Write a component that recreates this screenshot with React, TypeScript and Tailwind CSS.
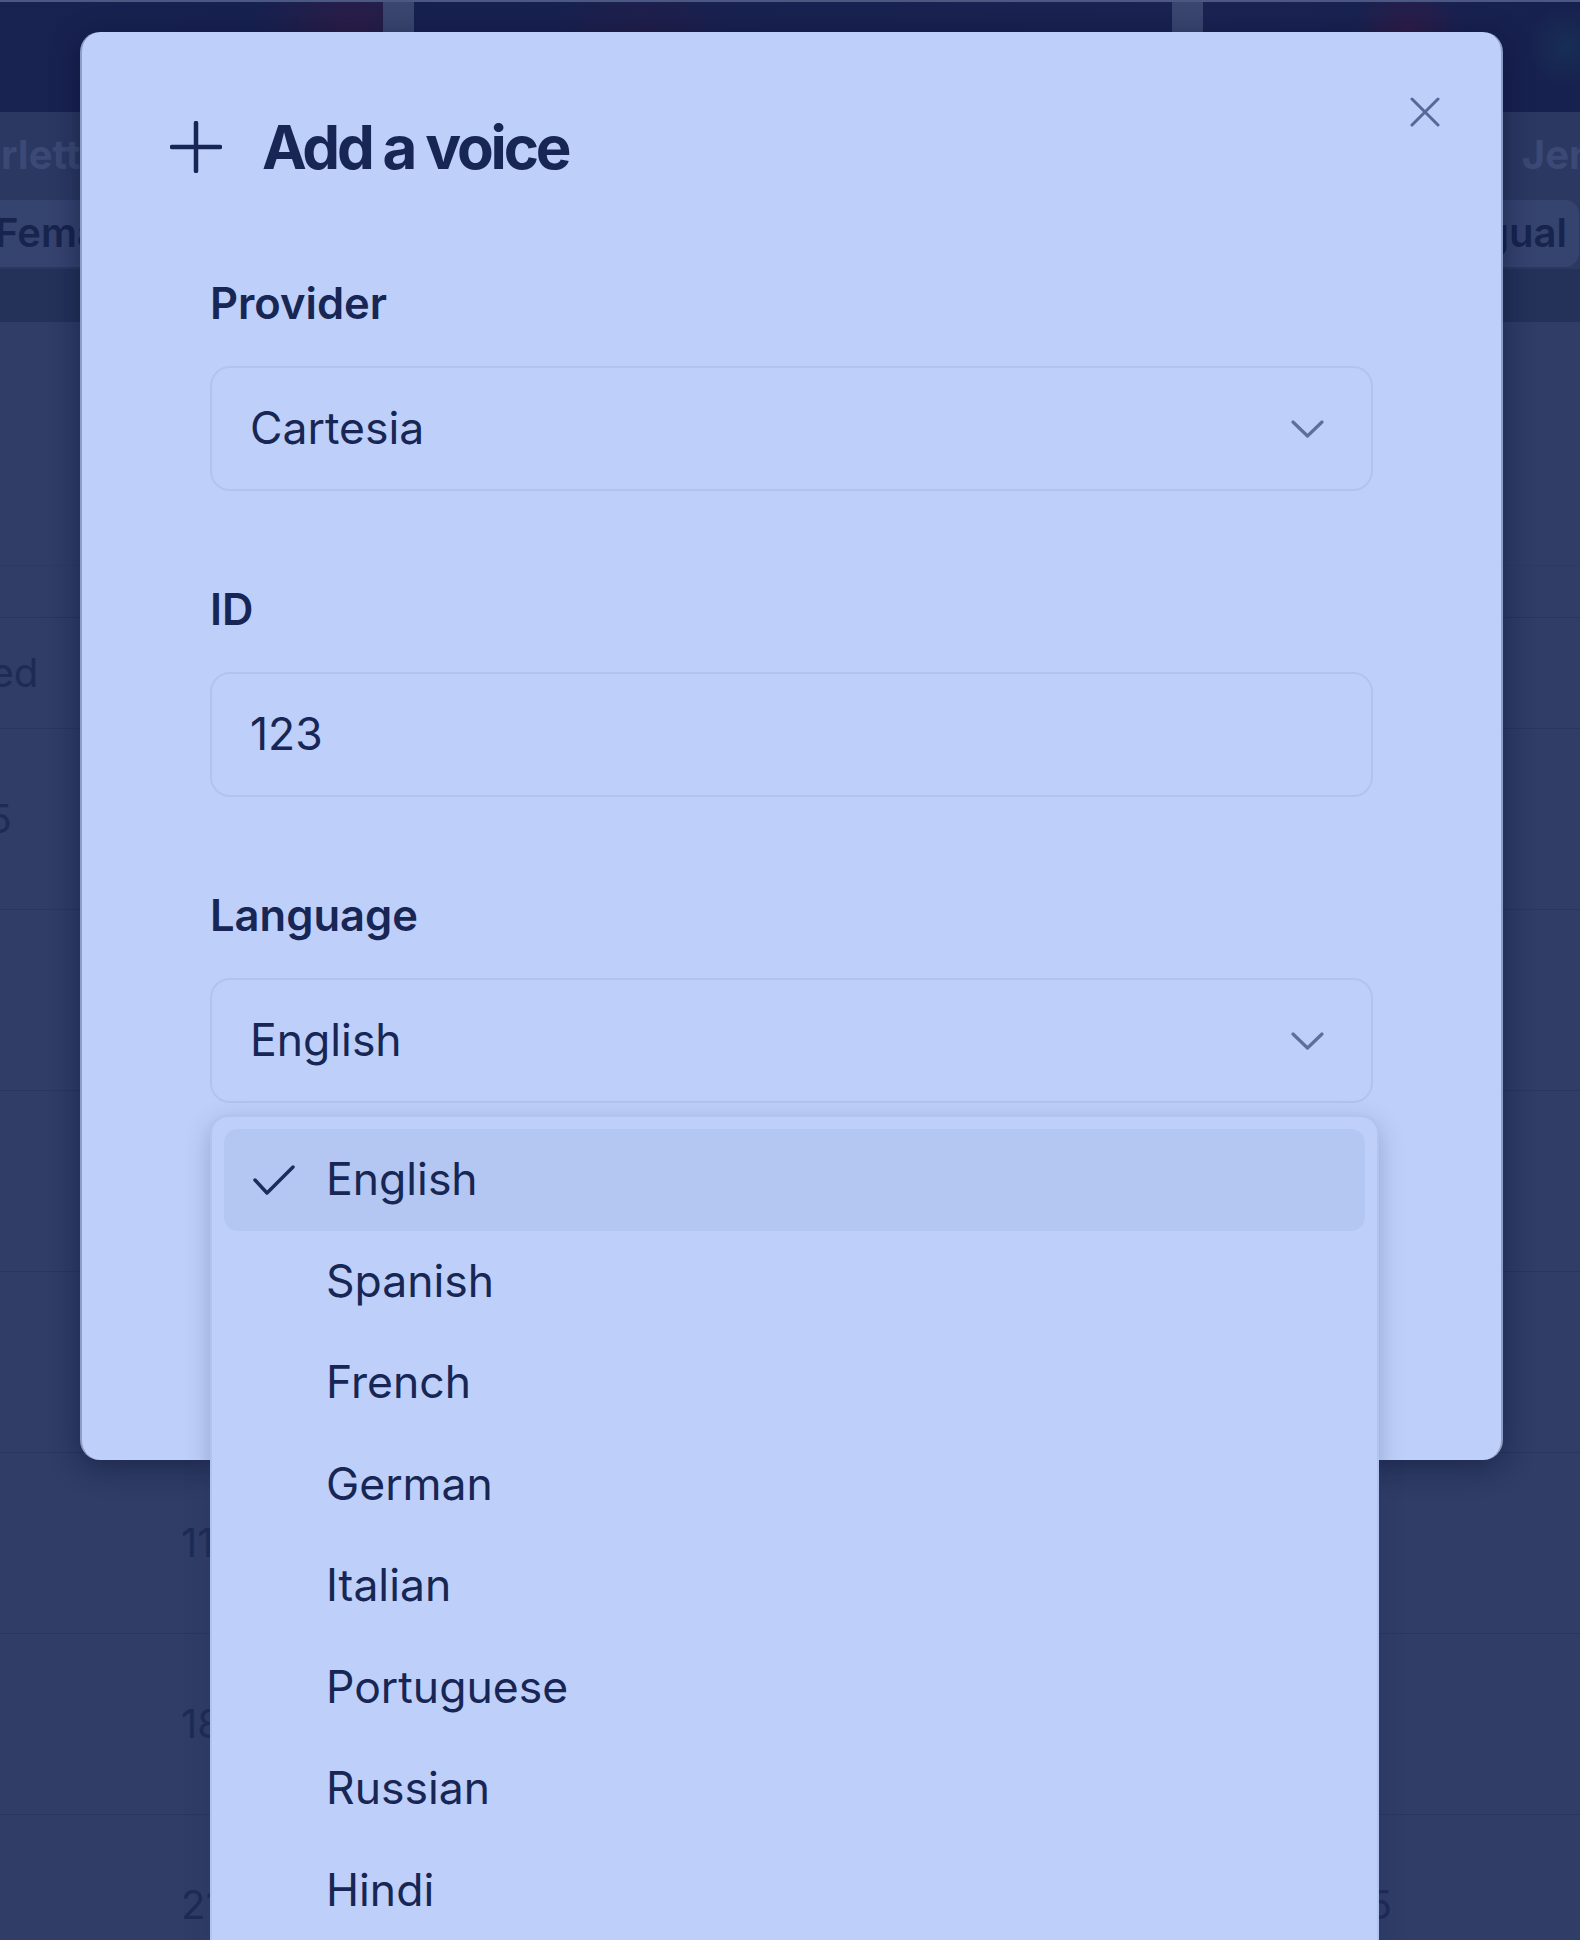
import React from "react";

type VoiceCard = {
  name: string;
  tags: string[];
  art: string;
  tagsAlign: string;
};

const voiceCards: VoiceCard[] = [
  {
    name: "Scarlett",
    tags: ["Female", "American"],
    art: "bg-[radial-gradient(circle_at_96%_30%,#2c1d48_0%,transparent_14%),linear-gradient(90deg,#1b2452,#162150)]",
    tagsAlign: "justify-start pl-[358px]",
  },
  {
    name: "Marcus",
    tags: ["Male", "British"],
    art: "bg-[radial-gradient(circle_at_30%_60%,#271d48_0%,transparent_18%),linear-gradient(90deg,#172150,#1a2351)]",
    tagsAlign: "justify-center",
  },
  {
    name: "Jenny",
    tags: ["Female", "Multilingual"],
    art: "bg-[radial-gradient(circle_at_27%_30%,#311c47_0%,transparent_10%),radial-gradient(circle_at_48%_40%,#172e55_0%,transparent_10%),linear-gradient(90deg,#1a2352,#141f4c)]",
    tagsAlign: "justify-end pr-[382px]",
  },
];

const languages = [
  "English",
  "Spanish",
  "French",
  "German",
  "Italian",
  "Portuguese",
  "Russian",
  "Hindi",
  "Japanese",
  "Chinese",
];

// usage table rows behind the dialog
const usageRows = [
  { h: "h-[111px]", first: "Cloned", firstOffset: "ml-[-96px]", second: "", last: "" },
  { h: "h-[181px]", first: "25", firstOffset: "ml-[-37px]", second: "", last: "" },
  { h: "h-[181px]", first: "", firstOffset: "", second: "", last: "" },
  { h: "h-[181px]", first: "", firstOffset: "", second: "", last: "" },
  { h: "h-[181px]", first: "", firstOffset: "", second: "", last: "" },
  { h: "h-[181px]", first: "", firstOffset: "", second: "11:42", last: "" },
  { h: "h-[181px]", first: "", firstOffset: "", second: "18:05", last: "" },
  { h: "h-[181px]", first: "", firstOffset: "", second: "21:30", last: "$0.25" },
];

function PlusGlyph() {
  return (
    <svg width="52" height="52" viewBox="0 0 52 52" fill="none" stroke="currentColor" strokeWidth="4.5" strokeLinecap="round">
      <path d="M26 2v48M2 26h48" />
    </svg>
  );
}

function CloseGlyph() {
  return (
    <svg width="30" height="30" viewBox="0 0 30 30" fill="none" stroke="currentColor" strokeWidth="3" strokeLinecap="round">
      <path d="M2 2l26 26M28 2L2 28" />
    </svg>
  );
}

function ChevronGlyph() {
  return (
    <svg width="33" height="18" viewBox="0 0 33 18" fill="none" stroke="currentColor" strokeWidth="3.2" strokeLinecap="round" strokeLinejoin="round">
      <path d="M2 2l14.5 14 14.5-14" />
    </svg>
  );
}

function CheckGlyph() {
  return (
    <svg width="42" height="32" viewBox="0 0 42 32" fill="none" stroke="currentColor" strokeWidth="3.5" strokeLinecap="round" strokeLinejoin="round">
      <path d="M2 16l12 13L40 3" />
    </svg>
  );
}

function Backdrop() {
  return (
    <div className="flex flex-col">
      <div className="h-[2px] bg-[#4b5882]" />
      <div className="flex gap-[31px] ml-[-375px] bg-[#3a4670]">
        {voiceCards.map((card) => (
          <div key={card.name} className="w-[758px] shrink-0 flex flex-col">
            <div className={`h-[110px] ${card.art}`} />
            <div className="h-[85px] bg-[#2b3862] flex items-center justify-center text-[40px] font-bold text-[#3a4975]">
              {card.name}
            </div>
            <div className={`h-[72px] bg-[#2b3862] flex items-center gap-[12px] ${card.tagsAlign}`}>
              {card.tags.map((tag) => (
                <span
                  key={tag}
                  className="h-[67px] px-[12px] rounded-[14px] bg-[#35436f] flex items-center text-[40px] font-semibold text-[#17244d]"
                >
                  {tag}
                </span>
              ))}
            </div>
          </div>
        ))}
      </div>
      <div className="h-[53px] bg-[#243159]" />
      <div className="h-[244px] border-b border-[#2d3a64]" />
      <div className="h-[52px] border-b border-[#283560]" />
      {usageRows.map((row, i) => (
        <div key={i} className={`${row.h} flex items-center border-b border-[#293660] text-[40px] text-[#1e2b54]`}>
          <div className="w-[181px] shrink-0">
            {row.first && <span className={`block ${row.firstOffset}`}>{row.first}</span>}
          </div>
          <div className="w-[1100px] shrink-0">{row.second}</div>
          <div className="w-[111px] shrink-0 text-right">{row.last}</div>
        </div>
      ))}
    </div>
  );
}

function SelectField({ value }: { value: string }) {
  return (
    <div className="h-[125px] rounded-[20px] border-2 border-[#b1c4ef] flex items-center justify-between pl-[38px] pr-[47px] text-[44.5px] text-[#172654]">
      <span>{value}</span>
      <span className="text-[#5f6f9c]">
        <ChevronGlyph />
      </span>
    </div>
  );
}

function FieldLabel({ children }: { children: React.ReactNode }) {
  return <div className="h-[50px] leading-[50px] text-[43.5px] font-semibold text-[#172654] mb-[38px]">{children}</div>;
}

function LanguageMenu({ selected }: { selected: string }) {
  return (
    <div className="absolute left-0 top-full mt-[12px] w-[1169px] rounded-[18px] border-2 border-[#b1c4ef] bg-[#bed0f9] p-[12px] shadow-[0_8px_24px_rgba(30,45,90,0.25)]">
      {languages.map((lang) => (
        <div
          key={lang}
          className={`h-[101.5px] rounded-[14px] flex items-center text-[44.5px] text-[#172654] ${
            lang === selected ? "bg-[#b4c7f3]" : ""
          }`}
        >
          <span className="w-[102px] shrink-0 pl-[29px] text-[#1d2c5c]">{lang === selected && <CheckGlyph />}</span>
          <span>{lang}</span>
        </div>
      ))}
    </div>
  );
}

function AddVoiceDialog() {
  return (
    <div className="absolute left-[80px] top-[32px] w-[1423px] h-[1428px] rounded-[20px] bg-[#bed0f9] border-l-2 border-r-2 border-[#8d9dc6] shadow-[0_6px_30px_rgba(5,12,40,0.45)] pt-[80px] px-[128px]">
      <button className="absolute right-[61px] top-[65px] text-[#56679a]">
        <CloseGlyph />
      </button>

      <div className="h-[70px] -ml-[40px] flex items-center gap-[40px] text-[#172654]">
        <PlusGlyph />
        <h2 className="text-[60px] leading-[70px] font-bold tracking-[-0.053em]">Add a voice</h2>
      </div>

      <div className="mt-[96px] flex flex-col gap-[93px]">
        <div>
          <FieldLabel>Provider</FieldLabel>
          <SelectField value="Cartesia" />
        </div>
        <div>
          <FieldLabel>ID</FieldLabel>
          <div className="h-[125px] rounded-[20px] border-2 border-[#b1c4ef] flex items-center pl-[38px] text-[44.5px] text-[#172654]">
            123
          </div>
        </div>
        <div className="relative">
          <FieldLabel>Language</FieldLabel>
          <SelectField value="English" />
          <LanguageMenu selected="English" />
        </div>
      </div>
    </div>
  );
}

export default function App() {
  return (
    <div className="relative w-[1580px] h-[1940px] overflow-hidden bg-[#2f3d67] font-['Inter','Liberation_Sans',sans-serif]">
      <Backdrop />
      <AddVoiceDialog />
    </div>
  );
}
